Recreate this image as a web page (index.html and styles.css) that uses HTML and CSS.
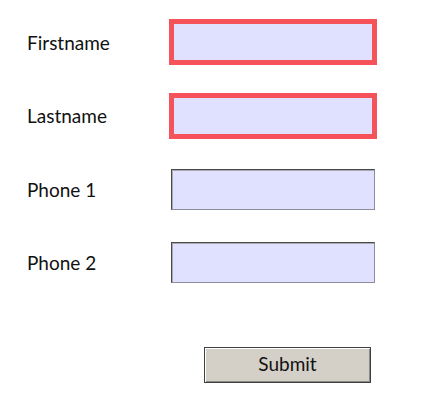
FILE: index.html
```html
<!DOCTYPE html>
<html lang="en">
<head>
<meta charset="utf-8">
<title>Form</title>
<link rel="stylesheet" href="styles.css">
</head>
<body>
<form class="form">
  <label class="label" for="fn">Firstname</label>
  <input class="field error" id="fn" type="text">
  <label class="label" for="ln">Lastname</label>
  <input class="field error" id="ln" type="text">
  <label class="label" for="p1">Phone 1</label>
  <input class="field" id="p1" type="text">
  <label class="label" for="p2">Phone 2</label>
  <input class="field" id="p2" type="text">
  <button class="submit" type="button">Submit</button>
</form>
</body>
</html>
```
FILE: styles.css
```css
html, body {
  margin: 0;
  padding: 0;
  background: #ffffff;
}
.form {
  display: grid;
  grid-template-columns: 144px 1fr;
  grid-template-rows: repeat(4, 73.5px) auto;
  align-items: center;
  padding: 5.25px 0 0 27px;
  font-family: Lato, "Open Sans", sans-serif;
  color: #111111;
}
.label {
  font-size: 19px;
  line-height: 22px;
  padding-top: 1px;
}
.field {
  justify-self: start;
  box-sizing: border-box;
  width: 204px;
  height: 41px;
  margin: 0;
  padding: 0;
  border: 1px solid;
  border-color: #4a4a4a #8c8c9c #8c8c9c #4a4a4a;
  box-shadow: inset 1px 1px 0 #a8a8b4;
  background: #dfe1ff;
  outline: none;
}
.field.error {
  width: 208px;
  height: 46px;
  margin-left: -2px;
  border: 5px solid #f5525a;
  box-shadow: none;
}
.submit {
  grid-column: 2;
  justify-self: start;
  margin: 47.75px 0 0 33px;
  box-sizing: border-box;
  width: 167px;
  height: 36px;
  padding: 0 0 4px;
  border: 1px solid #404040;
  box-shadow: inset 1px 1px 0 #ffffff, inset -1px -1px 0 #888888;
  background: #d4d0c8;
  font-family: Lato, "Open Sans", sans-serif;
  font-size: 19px;
  color: #111111;
}
```
